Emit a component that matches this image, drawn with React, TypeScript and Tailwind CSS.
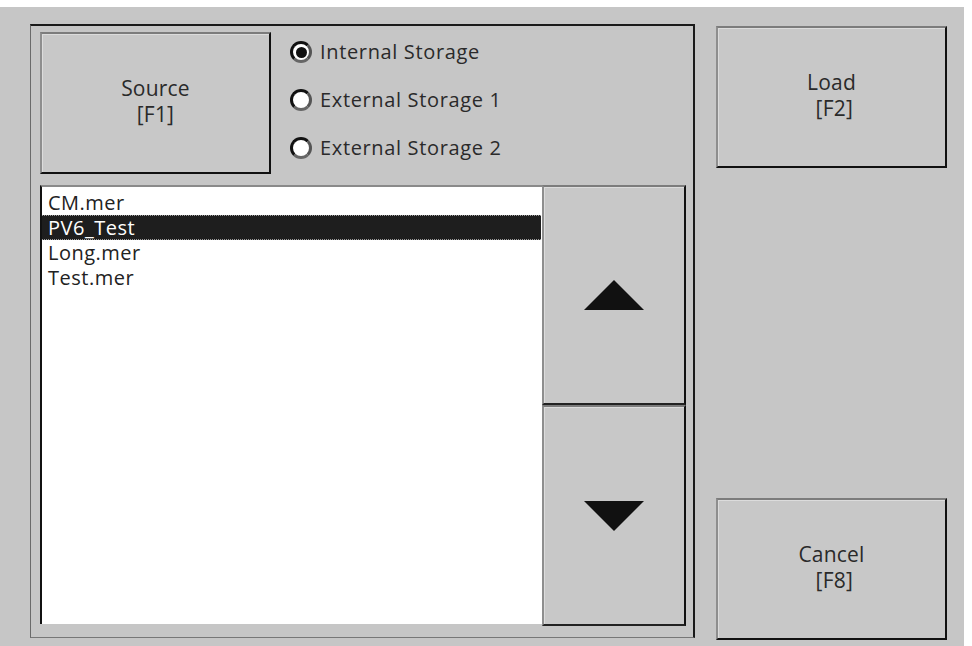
import React from "react";

function Btn({ lines, className = "" }: { lines: string[]; className?: string }) {
  return (
    <div
      className={
        "flex flex-col items-center justify-center pb-[5px] bg-[#c8c8c8] border-t-2 border-l-2 border-r-2 border-b-2 border-t-[#7c7c7c] border-l-[#8e8e8e] border-r-[#111] border-b-[#111] shadow-[inset_1px_1px_0_#dcdcdc] text-[21px] leading-[26px] tracking-[0.2px] text-[#2a2a2a] " +
        className
      }
    >
      {lines.map((l, i) => (
        <span key={i} className="whitespace-pre">
          {l}
        </span>
      ))}
    </div>
  );
}

function Radio({ checked, label }: { checked?: boolean; label: string }) {
  return (
    <div className="flex items-center h-[22px] gap-[8px]">
      <div className="w-[22px] h-[22px] rounded-full bg-white border-[3px] border-t-[#111] border-l-[#111] border-r-[#555] border-b-[#666] flex items-center justify-center">
        {checked && <div className="w-[11px] h-[11px] rounded-full bg-[#111]" />}
      </div>
      <span className="text-[20px] leading-[22px] tracking-[0.65px] text-[#2a2a2a]">{label}</span>
    </div>
  );
}

function ScrollBtn({ up, className = "" }: { up?: boolean; className?: string }) {
  return (
    <div
      className={
        "flex items-center justify-center bg-[#c8c8c8] border-t-2 border-l-2 border-r-2 border-b-2 border-t-[#7c7c7c] border-l-[#8e8e8e] border-r-[#111] border-b-[#222] shadow-[inset_1px_1px_0_#dcdcdc] " +
        className
      }
    >
      <svg width="60" height="30" viewBox="0 0 60 30">
        {up ? <polygon points="30,0 60,30 0,30" fill="#111" /> : <polygon points="0,0 60,0 30,30" fill="#111" />}
      </svg>
    </div>
  );
}

export default function App() {
  const files = ["CM.mer", "PV6_Test", "Long.mer", "Test.mer"];
  return (
    <div className="w-[972px] h-[646px] bg-white overflow-hidden font-['Open_Sans',sans-serif]">
      <div className="mt-[7px] w-[964px] h-[639px] bg-[#c6c6c6] flex pl-[30px] pt-[17px]">
        {/* main panel */}
        <div className="w-[665px] h-[614px] border-t-2 border-r-2 border-l border-b border-t-[#1a1a1a] border-r-[#1a1a1a] border-l-[#6a6a6a] border-b-[#777] flex flex-col pl-[9px] pt-[6px]">
          <div className="flex">
            <Btn lines={["Source", "[F1]"]} className="w-[231px] h-[142px]" />
            <div className="ml-[19px] mt-[9px] flex flex-col gap-[26px]">
              <Radio checked label="Internal Storage" />
              <Radio label="External Storage 1" />
              <Radio label="External Storage 2" />
            </div>
          </div>
          <div className="flex mt-[11px]">
            <div className="w-[502px] h-[439px] bg-white border-t-2 border-l-2 border-t-[#8a8a8a] border-l-[#111] pt-[3px] text-[20px] leading-[25px] tracking-[0.5px] text-[#222]">
              {files.map((f) => (
                <div
                  key={f}
                  className={
                    f === "PV6_Test"
                      ? "h-[25px] pl-[6px] bg-[#1e1e1e] text-white border-y border-dotted border-[#9a9a9a] leading-[23px] mr-[1px]"
                      : "h-[25px] pl-[6px]"
                  }
                >
                  {f}
                </div>
              ))}
            </div>
            <div className="flex flex-col w-[144px]">
              <ScrollBtn up className="h-[220px]" />
              <ScrollBtn className="h-[221px]" />
            </div>
          </div>
        </div>
        {/* right column */}
        <div className="ml-[21px] mt-[2px] h-[614px] flex flex-col justify-between">
          <Btn lines={["Load", " [F2]"]} className="w-[231px] h-[142px]" />
          <Btn lines={["Cancel", " [F8]"]} className="w-[231px] h-[142px]" />
        </div>
      </div>
    </div>
  );
}
